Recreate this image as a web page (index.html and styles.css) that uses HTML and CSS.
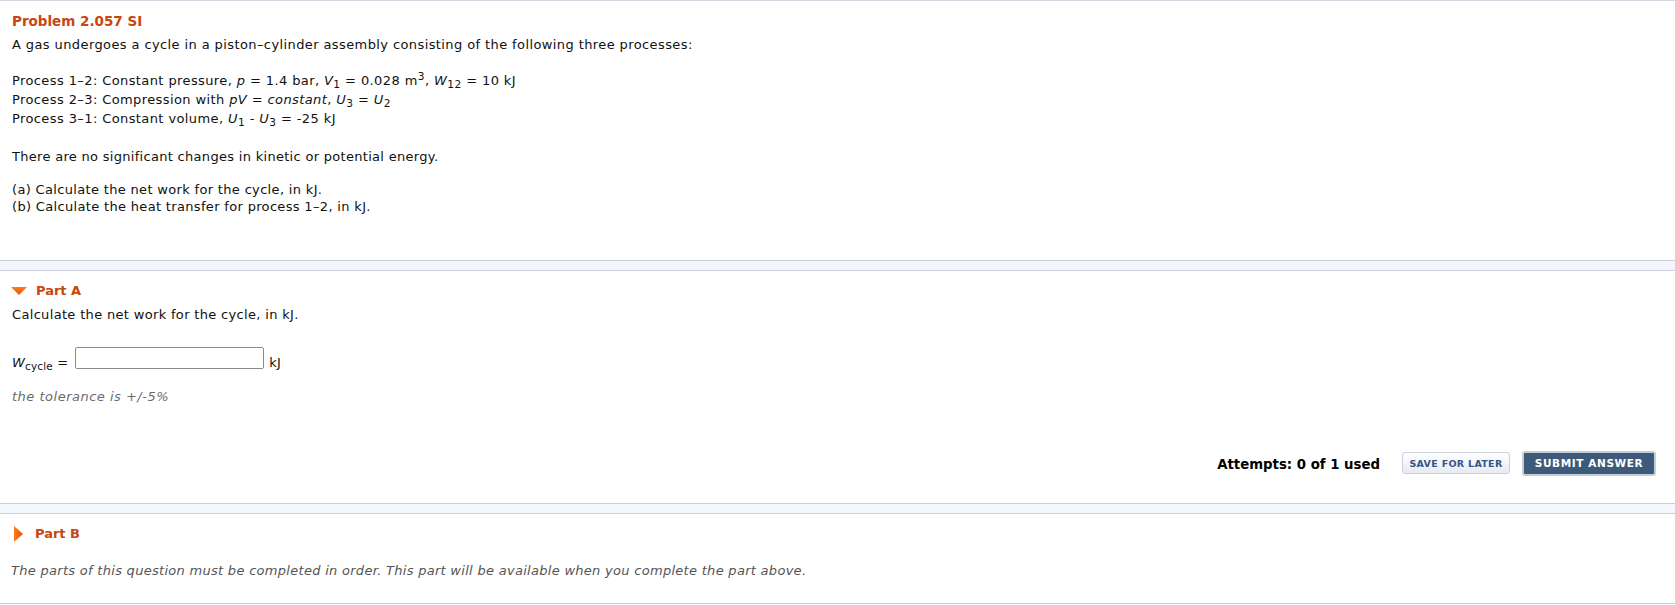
FILE: index.html
```html
<!DOCTYPE html>
<html>
<head>
<meta charset="utf-8">
<link rel="stylesheet" href="styles.css">
</head>
<body>
<section class="problem">
  <h1 class="title">Problem 2.057 SI</h1>
  <p class="intro">A gas undergoes a cycle in a piston–cylinder assembly consisting of the following three processes:</p>
  <div class="processes">
    <div>Process 1–2: Constant pressure, <i>p</i> = 1.4 bar, <i>V</i><sub>1</sub> = 0.028 m<sup>3</sup>, <i>W</i><sub>12</sub> = 10 kJ</div>
    <div>Process 2–3: Compression with <i>pV</i> = <i>constant</i>, <i>U</i><sub>3</sub> = <i>U</i><sub>2</sub></div>
    <div>Process 3–1: Constant volume, <i>U</i><sub>1</sub> - <i>U</i><sub>3</sub> = -25 kJ</div>
  </div>
  <p class="note">There are no significant changes in kinetic or potential energy.</p>
  <div class="tasks">
    <div>(a) Calculate the net work for the cycle, in kJ.</div>
    <div>(b) Calculate the heat transfer for process 1–2, in kJ.</div>
  </div>
</section>
<div class="band"></div>
<section class="part part-a">
  <div class="part-head">
    <svg class="tri-down" width="16" height="8" viewBox="0 0 16 8"><defs><linearGradient id="ga" x1="0" y1="0" x2="0" y2="1"><stop offset="0" stop-color="#ff7a1a"/><stop offset="1" stop-color="#e85400"/></linearGradient></defs><polygon points="0,0 16,0 8,8" fill="url(#ga)"/></svg>
    <span class="part-title">Part A</span>
  </div>
  <p class="question">Calculate the net work for the cycle, in kJ.</p>
  <div class="answer-row">
    <span class="lbl"><i>W</i><sub class="var-sub">cycle</sub> =</span>
    <input class="answer" type="text">
    <span class="lbl unit">kJ</span>
  </div>
  <p class="tolerance">the tolerance is +/-5%</p>
  <div class="actions">
    <span class="attempts">Attempts: 0 of 1 used</span>
    <button class="btn-save">SAVE FOR LATER</button>
    <button class="btn-submit">SUBMIT ANSWER</button>
  </div>
</section>
<div class="band"></div>
<section class="part part-b">
  <div class="part-head">
    <svg class="tri-right" width="9" height="16" viewBox="0 0 9 16"><defs><linearGradient id="gb" x1="0" y1="0" x2="1" y2="0"><stop offset="0" stop-color="#ff7a1a"/><stop offset="1" stop-color="#e85400"/></linearGradient></defs><polygon points="0,0 9,8 0,16" fill="url(#gb)"/></svg>
    <span class="part-title">Part B</span>
  </div>
  <p class="locked">The parts of this question must be completed in order. This part will be available when you complete the part above.</p>
</section>
</body>
</html>
```

FILE: styles.css
```css
* { box-sizing: border-box; }
html, body { margin: 0; padding: 0; background: #fff; }
body {
  font-family: "DejaVu Sans", Verdana, sans-serif;
  font-size: 13px;
  letter-spacing: 0.4px;
  line-height: 17px;
  color: #111;
  width: 1675px;
}
p { margin: 0; }
sub, sup { line-height: 0; font-size: 0.82em; }
sub { vertical-align: -0.3em; }
sup { vertical-align: 0.45em; }

.problem {
  border-top: 1px solid #d3d9e3;
  padding: 11px 12px 44px;
}
.title {
  margin: 0;
  font-size: 13.5px;
  line-height: 18px;
  letter-spacing: 0;
  font-weight: bold;
  color: #c8460f;
}
.intro { margin-top: 6px; }
.processes { margin-top: 19.4px; line-height: 18.7px; }
.note { margin-top: 19.5px; letter-spacing: 0.3px; }
.tasks { margin-top: 17.4px; line-height: 16.7px; letter-spacing: 0.33px; }

.band {
  height: 11px;
  background: #f3f6fa;
  border-top: 1px solid #c9d0dc;
  border-bottom: 1px solid #c9d0dc;
}

.part-a { padding: 11.5px 0 27px; }
.part-b { padding: 10.8px 0 23.7px; border-bottom: 1px solid #c9d0dc; }

.part-head {
  display: flex;
  align-items: center;
  height: 18px;
}
.tri-down { margin-left: 11px; margin-right: 9px; }
.tri-right { margin-left: 14px; margin-right: 12px; }
.part-title {
  font-size: 13px;
  line-height: 18px;
  letter-spacing: 0;
  font-weight: bold;
  color: #c8460f;
}

.question { margin-top: 5.8px; padding-left: 12px; letter-spacing: 0.33px; }

.answer-row {
  display: flex;
  align-items: flex-start;
  margin-top: 23.7px;
  padding-left: 12px;
}
.lbl { padding-top: 7px; line-height: 17px; white-space: nowrap; letter-spacing: 0.2px; }
.var-sub { font-size: 0.8em; vertical-align: -0.32em; }
.answer {
  width: 189px;
  height: 22px;
  margin: 0 5px 0 7px;
  border: 1px solid #8a8a8a;
  border-radius: 2px;
  padding: 0;
  background: #fff;
}

.tolerance {
  margin-top: 17.6px;
  padding-left: 12px;
  font-style: italic;
  letter-spacing: 0.5px;
  color: #6b6b6b;
}

.actions {
  display: flex;
  align-items: center;
  justify-content: flex-end;
  margin-top: 45.4px;
  padding-right: 19px;
  height: 25px;
}
.attempts {
  font-size: 13.3px;
  line-height: 18px;
  letter-spacing: 0;
  font-weight: bold;
  color: #000;
  margin-top: 4px;
  margin-right: 22px;
}
.btn-save {
  width: 108px;
  height: 22px;
  margin-right: 12px;
  padding: 0;
  border: 1px solid #c8d0dc;
  border-radius: 3px;
  background: linear-gradient(#ffffff, #e6ebf2);
  color: #35558a;
  font-family: "DejaVu Sans", Verdana, sans-serif;
  font-size: 9.5px;
  font-weight: bold;
  letter-spacing: 0.3px;
}
.btn-submit {
  width: 134px;
  height: 25px;
  padding: 0;
  border: 2px solid #c3cdd9;
  border-radius: 3px;
  background: #3e5a7b;
  color: #fff;
  font-family: "DejaVu Sans", Verdana, sans-serif;
  font-size: 10.5px;
  font-weight: bold;
  letter-spacing: 0.6px;
}

.locked {
  margin-top: 19.5px;
  padding-left: 11px;
  font-style: italic;
  letter-spacing: 0.29px;
  color: #555;
}
```
